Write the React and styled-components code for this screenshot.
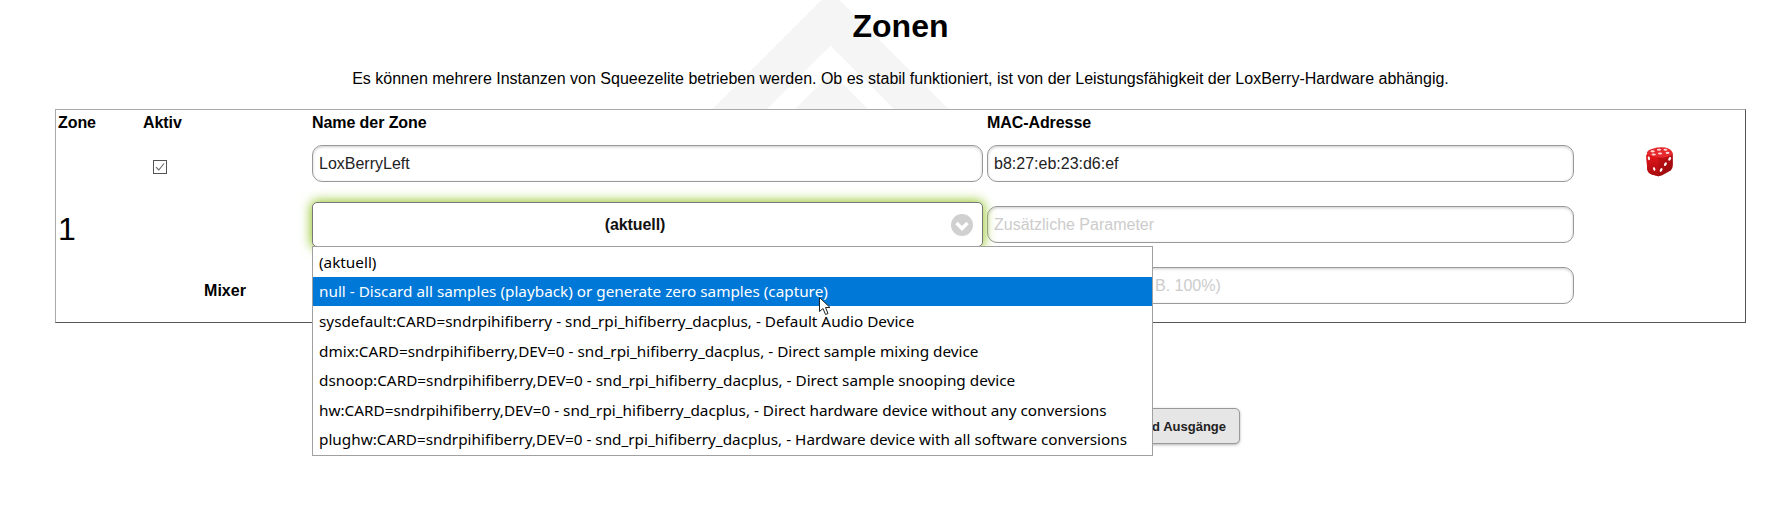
import React from "react";
import styled, { createGlobalStyle } from "styled-components";

const Global = createGlobalStyle`
  html, body { margin: 0; padding: 0; background: #fff; }
  body { font-family: "Liberation Sans", Arial, sans-serif; color: #000; font-size: 16px; overflow: hidden; }
`;

const Page = styled.div`
  position: relative;
  z-index: 0;
  height: 509px;
  padding: 0 42px 0 55px;
  overflow: hidden;
`;

const Watermark = styled.svg`
  position: absolute;
  z-index: -1;
  left: 680px;
  top: 0;
`;

const Title = styled.h1`
  margin: 0;
  height: 52px;
  font-size: 32px;
  line-height: 52px;
  font-weight: 700;
  text-align: center;
`;

const Intro = styled.p`
  margin: 0;
  height: 57px;
  padding-top: 15px;
  box-sizing: border-box;
  font-size: 16px;
  line-height: 24px;
  text-align: center;
`;

const ZoneBox = styled.div`
  box-sizing: border-box;
  height: 214px;
  padding-left: 2px;
  background: #fff;
  border: 1px solid;
  border-color: #aaa #555 #555 #aaa;
  display: grid;
  grid-template-columns: 85px 169px 675px 587px 1fr;
  grid-template-rows: 35px 57px 65px 55px;
`;

const HeadCell = styled.div`
  padding-top: 1px;
  font-weight: 700;
  font-size: 16px;
  line-height: 24px;
  letter-spacing: -0.08px;
`;

const ZoneNumber = styled.div`
  grid-column: 1;
  grid-row: 2 / 5;
  display: flex;
  align-items: center;
  padding-bottom: 8px;
  font-size: 32px;
`;

const Cell = styled.div`
  display: flex;
  align-items: flex-start;
  min-width: 0;
`;

const AktivCell = styled(Cell)`
  padding: 15px 0 0 10px;
`;

const Check = styled.span`
  box-sizing: border-box;
  width: 14px;
  height: 14px;
  border: 1px solid #555;
  background: #fff;
  display: flex;
  align-items: center;
  justify-content: center;
`;

const MixerLabel = styled(Cell)`
  justify-content: center;
  font-weight: 700;
  padding: 12px 5px 0 0;
  line-height: 24px;
`;

const TextField = styled.input`
  box-sizing: border-box;
  height: 37px;
  margin-top: ${(p) => p.$top || 0}px;
  width: ${(p) => p.$width}px;
  padding: 0 6px;
  border: 1px solid #999;
  border-radius: 10px;
  background: #fff;
  box-shadow: inset 0 1px 3px rgba(0, 0, 0, 0.2);
  font: 16px "Liberation Sans", Arial, sans-serif;
  color: #222;
  outline: none;
  &::placeholder { color: #ccc; opacity: 1; }
`;

const SelectWrap = styled.div`
  position: relative;
  width: 671px;
`;

const SelectBox = styled.div`
  box-sizing: border-box;
  height: 45px;
  border: 1px solid #777;
  border-radius: 5px;
  background: #fff;
  box-shadow: 0 0 12px 1px #8fc31f;
  display: flex;
  align-items: center;
  justify-content: center;
  padding-right: 25px;
  font-weight: 700;
  font-size: 16px;
  letter-spacing: -0.1px;
  color: #111;
`;

const Chevron = styled.svg`
  position: absolute;
  right: 10px;
  top: 12px;
`;

const Dropdown = styled.ul`
  position: absolute;
  z-index: 5;
  left: 0;
  top: 44px;
  box-sizing: border-box;
  width: 841px;
  height: 210px;
  margin: 0;
  padding: 0 0 1px;
  list-style: none;
  background: #fff;
  border: 1px solid #a0a0a0;
  display: flex;
  flex-direction: column;
`;

const Option = styled.li`
  flex: 1;
  display: flex;
  align-items: center;
  padding-left: 6px;
  font-family: "Noto Sans", sans-serif;
  font-size: 15.3px;
  white-space: nowrap;
  color: ${(p) => (p.$active ? "#fff" : "#000")};
  background: ${(p) => (p.$active ? "#0078d7" : "transparent")};
`;

const Pointer = styled.svg`
  position: absolute;
  z-index: 6;
  left: 819px;
  top: 297px;
`;

const DiceCell = styled(Cell)`
  padding: 1px 0 0 70px;
`;

const Actions = styled.div`
  display: flex;
  justify-content: flex-end;
  margin: 85px 506px 0 0;
`;

const Button = styled.button`
  box-sizing: border-box;
  height: 36px;
  padding: 0 13px;
  border: 1px solid #999;
  border-radius: 5px;
  background: #e6e6e6;
  box-shadow: 0 1px 3px rgba(0, 0, 0, 0.3);
  font: 700 13px "Liberation Sans", Arial, sans-serif;
  color: #222;
`;

const Dice = () => (
  <svg width="30" height="32" viewBox="0 0 28 30">
    <defs>
      <linearGradient id="dl" x1="0" y1="0" x2="0" y2="1">
        <stop offset="0" stopColor="#e8161a" />
        <stop offset="1" stopColor="#a80b0e" />
      </linearGradient>
      <linearGradient id="dr" x1="0" y1="0" x2="1" y2="1">
        <stop offset="0" stopColor="#e01418" />
        <stop offset="1" stopColor="#8f0a0c" />
      </linearGradient>
    </defs>
    <path d="M4 7 Q2 7 2 10 L3 22 Q4 26 8 27 L13 28 Q15 28.5 17 27.5 L25 23 Q27 21 27 18 L27 9 Q27 6 25 6 L6 5 Z" fill="url(#dr)" />
    <path d="M3 7 Q2 9 2.5 13 L3 22 Q4 26 8 27 L14 28.5 L13 10 Z" fill="url(#dl)" />
    <path d="M2.5 6.5 Q3 4 8 2.5 Q14 0.5 20 1.5 Q26 3 27 7 Q27 9 22 10 Q17 11.5 13 10.5 Q4 9.5 2.5 6.5 Z" fill="#e5292c" />
    <g fill="#ffd9d9">
      <ellipse cx="8" cy="5" rx="2" ry="1" />
      <ellipse cx="14" cy="3.5" rx="2" ry="1" />
      <ellipse cx="20" cy="3.5" rx="1.8" ry="1" />
      <ellipse cx="9" cy="8" rx="2" ry="1" />
      <ellipse cx="15" cy="7" rx="2" ry="1" />
      <ellipse cx="22" cy="6.5" rx="1.8" ry="1" />
    </g>
    <g fill="#fff">
      <ellipse cx="4.5" cy="11.5" rx="1" ry="1.8" transform="rotate(-10 4.5 11.5)" />
      <ellipse cx="9.5" cy="21.5" rx="1" ry="1.8" transform="rotate(-20 9.5 21.5)" />
      <ellipse cx="16" cy="22.5" rx="1.1" ry="1.9" transform="rotate(30 16 22.5)" />
      <ellipse cx="20" cy="17" rx="1.1" ry="1.9" transform="rotate(30 20 17)" />
      <ellipse cx="24" cy="12" rx="1.1" ry="1.9" transform="rotate(30 24 12)" />
    </g>
  </svg>
);

const options = [
  "(aktuell)",
  "null - Discard all samples (playback) or generate zero samples (capture)",
  "sysdefault:CARD=sndrpihifiberry - snd_rpi_hifiberry_dacplus, - Default Audio Device",
  "dmix:CARD=sndrpihifiberry,DEV=0 - snd_rpi_hifiberry_dacplus, - Direct sample mixing device",
  "dsnoop:CARD=sndrpihifiberry,DEV=0 - snd_rpi_hifiberry_dacplus, - Direct sample snooping device",
  "hw:CARD=sndrpihifiberry,DEV=0 - snd_rpi_hifiberry_dacplus, - Direct hardware device without any conversions",
  "plughw:CARD=sndrpihifiberry,DEV=0 - snd_rpi_hifiberry_dacplus, - Hardware device with all software conversions",
];

export default function App() {
  return (
    <Page>
      <Global />
      <Watermark width="320" height="109" viewBox="680 0 320 109">
        <path d="M830.5 -9 L1000 160.5 L661 160.5 Z M830.5 45.7 L766 110 L895 110 Z" fill="#f5f5f5" fillRule="evenodd" />
        <path d="M831.5 72.5 L795 109 L868 109 Z" fill="#f5f5f5" />
      </Watermark>
      <Title>Zonen</Title>
      <Intro>
        Es können mehrere Instanzen von Squeezelite betrieben werden. Ob es stabil funktioniert, ist von der
        Leistungsfähigkeit der LoxBerry-Hardware abhängig.
      </Intro>
      <ZoneBox>
        <HeadCell>Zone</HeadCell>
        <HeadCell>Aktiv</HeadCell>
        <HeadCell>Name der Zone</HeadCell>
        <HeadCell>MAC-Adresse</HeadCell>
        <HeadCell />

        <ZoneNumber>1</ZoneNumber>
        <AktivCell>
          <Check>
            <svg width="12" height="12" viewBox="0 0 12 12">
              <path d="M2 6.2 L4.8 9 L10 2.5" fill="none" stroke="#666" strokeWidth="1.1" />
            </svg>
          </Check>
        </AktivCell>
        <Cell>
          <TextField $width={671} defaultValue="LoxBerryLeft" />
        </Cell>
        <Cell>
          <TextField $width={587} defaultValue="b8:27:eb:23:d6:ef" />
        </Cell>
        <DiceCell>
          <Dice />
        </DiceCell>

        <Cell />
        <Cell>
          <SelectWrap>
            <SelectBox>(aktuell)</SelectBox>
            <Chevron width="22" height="22" viewBox="0 0 22 22">
              <circle cx="11" cy="11" r="11" fill="#d0d0d0" />
              <path d="M5.5 9 L11 14.5 L16.5 9" fill="none" stroke="#fff" strokeWidth="3.4" />
            </Chevron>
            <Dropdown>
              {options.map((o, i) => (
                <Option key={o} $active={i === 1}>
                  {o}
                </Option>
              ))}
            </Dropdown>
          </SelectWrap>
        </Cell>
        <Cell>
          <TextField $width={587} $top={4} placeholder="Zusätzliche Parameter" />
        </Cell>
        <Cell />

        <MixerLabel>Mixer</MixerLabel>
        <Cell>
          <TextField $width={671} />
        </Cell>
        <Cell>
          <TextField $width={587} placeholder="Standardlautstärke (z. B. 100%)" />
        </Cell>
        <Cell />
      </ZoneBox>
      <Actions>
        <Button>Soundkarten und Ausgänge</Button>
      </Actions>
      <Pointer width="14" height="20" viewBox="0 0 14 20">
        <path d="M0.5 0.5 L0.5 14.5 L4 11.5 L6.5 17.5 L9 16.5 L6.5 10.5 L11 10.5 Z" fill="#fff" stroke="#222" strokeWidth="1" />
      </Pointer>
    </Page>
  );
}
